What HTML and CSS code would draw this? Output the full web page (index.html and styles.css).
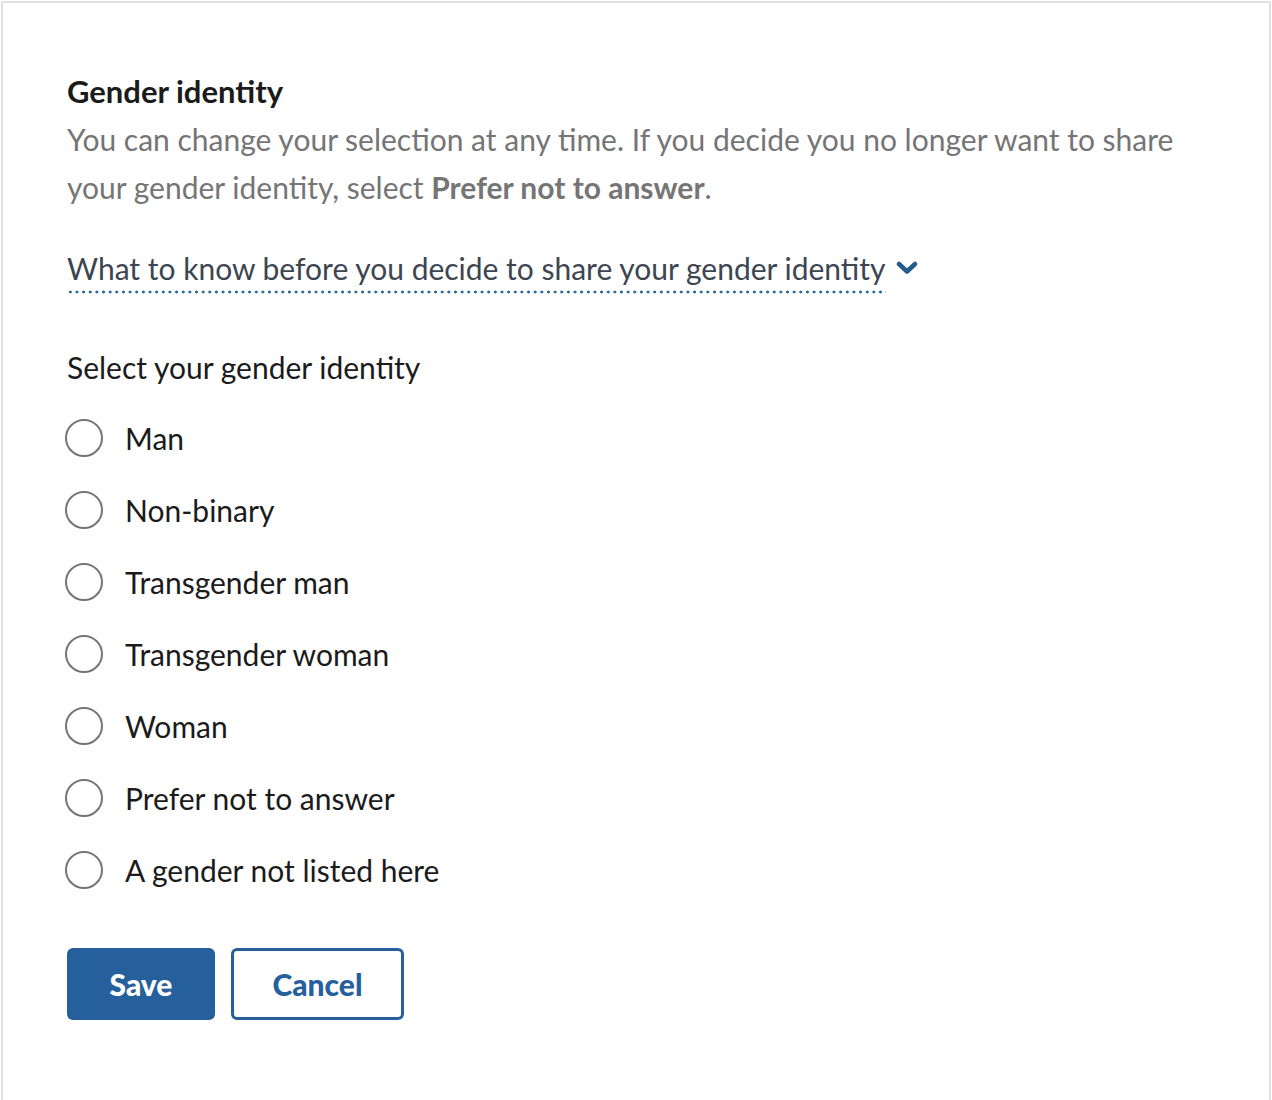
FILE: index.html
```html
<!DOCTYPE html>
<html lang="en">
<head>
<meta charset="utf-8">
<title>Gender identity</title>
<link rel="stylesheet" href="styles.css">
</head>
<body>
<div class="panel">
  <h2 class="title">Gender identity</h2>
  <p class="desc">You can change your selection at any time. If you decide you no longer want to share your gender identity, select <strong>Prefer not to answer</strong>.</p>
  <div class="info">
    <span class="info-link">What to know before you decide to share your gender identity</span>
    <svg class="chev" width="22" height="16" viewBox="0 0 22 16"><path d="M3 4 L11 11.5 L19 4" fill="none" stroke="#255b8e" stroke-width="4.5" stroke-linecap="round" stroke-linejoin="round"/></svg>
  </div>
  <fieldset class="group">
    <legend class="legend">Select your gender identity</legend>
    <label class="opt"><span class="radio"></span><span class="lbl">Man</span></label>
    <label class="opt"><span class="radio"></span><span class="lbl">Non-binary</span></label>
    <label class="opt"><span class="radio"></span><span class="lbl">Transgender man</span></label>
    <label class="opt"><span class="radio"></span><span class="lbl">Transgender woman</span></label>
    <label class="opt"><span class="radio"></span><span class="lbl">Woman</span></label>
    <label class="opt"><span class="radio"></span><span class="lbl">Prefer not to answer</span></label>
    <label class="opt"><span class="radio"></span><span class="lbl">A gender not listed here</span></label>
  </fieldset>
  <div class="actions">
    <button class="btn btn-primary">Save</button>
    <button class="btn btn-outline">Cancel</button>
  </div>
</div>
</body>
</html>
```

FILE: styles.css
```css
html, body {
  margin: 0;
  padding: 0;
  background: #ffffff;
}
body {
  font-family: "Lato", "Open Sans", sans-serif;
  color: #1b1b1b;
  padding: 1px 0 0 1px;
}
.panel {
  width: 1270px;
  height: 1120px;
  border: 2px solid #e1e1e1;
  border-bottom: none;
  box-sizing: border-box;
  padding: 68px 0 0 64px;
}
.title {
  margin: 0;
  font-size: 31px;
  line-height: 40px;
  font-weight: 700;
  color: #1b1b1b;
}
.desc {
  margin: 4px 0 0 0;
  font-size: 30px;
  line-height: 48px;
  color: #757575;
  width: 1150px;
}
.desc strong {
  font-weight: 700;
}
.info {
  display: flex;
  align-items: center;
  margin-top: 36px;
  height: 48px;
}
.info-link {
  font-size: 30px;
  line-height: 40px;
  color: #3d4551;
  padding-bottom: 6px;
  background-image: radial-gradient(circle, #2a6a99 1.3px, transparent 1.7px);
  background-size: 6.65px 4px;
  background-repeat: repeat-x;
  background-position: 0 100%;
}
.chev {
  margin-left: 10px;
  margin-top: -6px;
}
.group {
  border: none;
  margin: 0;
  padding: 0;
  margin-top: 52px;
}
.legend {
  padding: 0;
  font-size: 30px;
  line-height: 40px;
  color: #1b1b1b;
}
.opt {
  display: flex;
  align-items: center;
  height: 72px;
  font-size: 30px;
}
.opt:first-of-type {
  margin-top: 15px;
}
.radio {
  width: 38px;
  height: 38px;
  box-sizing: border-box;
  border: 2px solid #757575;
  border-radius: 50%;
  margin-left: -2px;
  flex: none;
}
.lbl {
  margin-left: 22px;
  color: #1b1b1b;
}
.actions {
  display: flex;
  gap: 16px;
  margin-top: 42px;
}
.btn {
  font-family: inherit;
  font-size: 30px;
  font-weight: 900;
  height: 72px;
  border-radius: 6px;
  box-sizing: border-box;
  cursor: pointer;
  padding: 0;
}
.btn-primary {
  width: 148px;
  background: #255f9c;
  color: #ffffff;
  border: none;
}
.btn-outline {
  width: 173px;
  background: #ffffff;
  color: #255f9c;
  border: 3px solid #255f9c;
}
```
